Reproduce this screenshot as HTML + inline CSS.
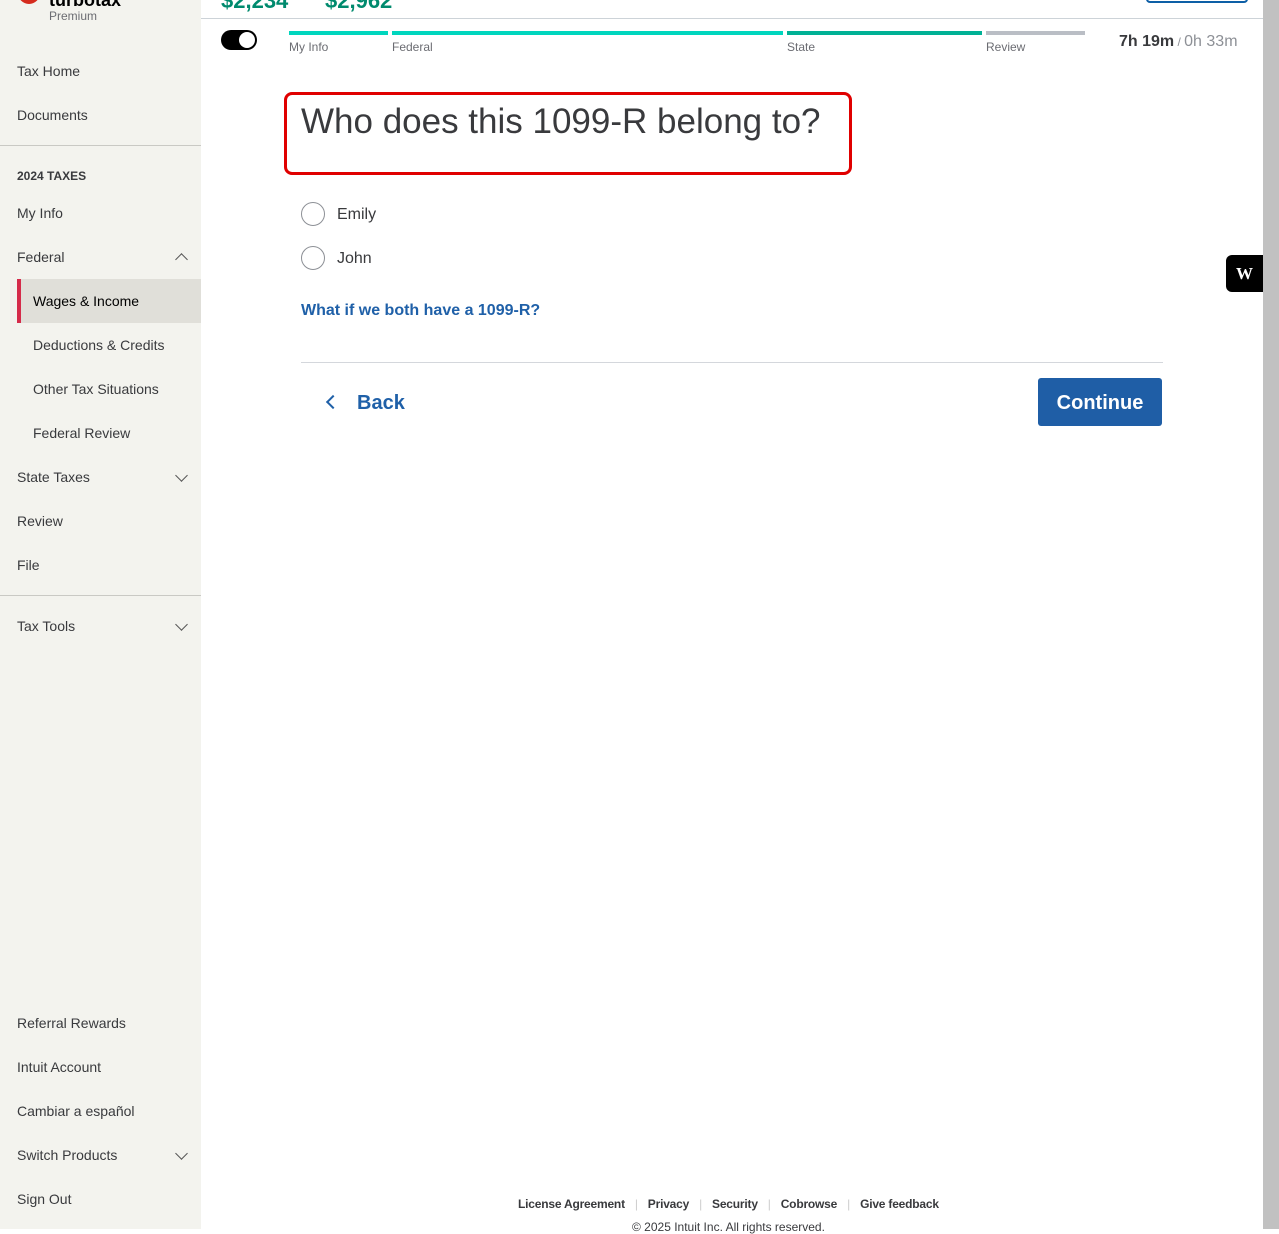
<!DOCTYPE html>
<html><head><meta charset="utf-8"><style>
*{margin:0;padding:0;box-sizing:border-box}
body{width:1279px;height:1229px;overflow:hidden;font-family:"Liberation Sans",sans-serif;background:#fff;position:relative;color:#393a3d}
.sb{position:absolute;left:0;top:0;width:201px;height:1229px;background:#f3f3ee}
.it{position:absolute;left:17px;font-size:14px;color:#393a3d}
.sub{left:33px}
.hr{position:absolute;left:0;width:201px;height:1px;background:#c9c9c4}
.chev{position:absolute;left:177px;width:9px;height:9px;border-left:1.6px solid #555;border-bottom:1.6px solid #555}
.dn{transform:rotate(-45deg)}
.up{transform:rotate(135deg)}
.a{position:absolute}
</style></head><body>
<div class="sb">
<div class="a" style="left:18px;top:-8px;width:22px;height:12px;border-radius:0 0 11px 11px;background:#d52b1e"></div>
<div class="a" style="left:49px;top:-10px;font-weight:bold;font-size:18px;color:#000">turbotax</div>
<div class="a" style="left:49px;top:9px;font-size:12px;color:#6b6c72">Premium</div>
<div class="it" style="top:63px">Tax Home</div>
<div class="it" style="top:107px">Documents</div>
<div class="hr" style="top:145px"></div>
<div class="it" style="top:169px;font-size:12px;font-weight:bold">2024 TAXES</div>
<div class="it" style="top:205px">My Info</div>
<div class="it" style="top:249px">Federal</div><div class="chev up" style="top:255px"></div>
<div class="a" style="left:17px;top:279px;width:184px;height:44px;background:#e0dfd9;border-left:4px solid #d52b4a"></div>
<div class="it sub" style="top:293px;color:#000">Wages &amp; Income</div>
<div class="it sub" style="top:337px">Deductions &amp; Credits</div>
<div class="it sub" style="top:381px">Other Tax Situations</div>
<div class="it sub" style="top:425px">Federal Review</div>
<div class="it" style="top:469px">State Taxes</div><div class="chev dn" style="top:471px"></div>
<div class="it" style="top:513px">Review</div>
<div class="it" style="top:557px">File</div>
<div class="hr" style="top:595px"></div>
<div class="it" style="top:618px">Tax Tools</div><div class="chev dn" style="top:620px"></div>
<div class="it" style="top:1015px">Referral Rewards</div>
<div class="it" style="top:1059px">Intuit Account</div>
<div class="it" style="top:1103px">Cambiar a español</div>
<div class="it" style="top:1147px">Switch Products</div><div class="chev dn" style="top:1149px"></div>
<div class="it" style="top:1191px">Sign Out</div>
</div>
<div class="a" style="left:221px;top:-12px;font-size:22px;color:#008a6e;font-weight:bold">$2,234</div>
<div class="a" style="left:325px;top:-12px;font-size:22px;color:#008a6e;font-weight:bold">$2,962</div>
<div class="a" style="left:1146px;top:-6px;width:102px;height:9px;border:2px solid #0d5fa6;border-radius:4px"></div>
<div class="a" style="left:201px;top:18px;width:1062px;height:1px;background:#cdd3d8"></div>
<div class="a" style="left:221px;top:30px;width:36px;height:20px;border-radius:10px;background:#000"></div>
<div class="a" style="left:239px;top:32px;width:16px;height:16px;border-radius:50%;background:#fff"></div>
<div class="a" style="left:289px;top:31px;width:99px;height:4px;background:#00d6be"></div>
<div class="a" style="left:392px;top:31px;width:391px;height:4px;background:#00d6be"></div>
<div class="a" style="left:787px;top:31px;width:195px;height:4px;background:#00b195"></div>
<div class="a" style="left:986px;top:31px;width:99px;height:4px;background:#babec5"></div>
<div class="a" style="left:289px;top:40px;font-size:12px;color:#6b6c72">My Info</div>
<div class="a" style="left:392px;top:40px;font-size:12px;color:#6b6c72">Federal</div>
<div class="a" style="left:787px;top:40px;font-size:12px;color:#6b6c72">State</div>
<div class="a" style="left:986px;top:40px;font-size:12px;color:#6b6c72">Review</div>
<div class="a" style="left:1119px;top:33px;font-size:16px"><b style="color:#393a3d">7h 19m</b><span style="color:#8d9096;font-size:12px"> / </span><span style="color:#8d9096">0h 33m</span></div>
<div class="a" style="left:1226px;top:255px;width:37px;height:37px;background:#000;border-radius:6px 0 0 6px;color:#fff;font-weight:bold;font-family:'Liberation Serif',serif;font-size:17px;text-align:center;line-height:37px">W</div>
<div class="a" style="left:1263px;top:0;width:16px;height:1229px;background:#c1c1c1"></div>
<div class="a" style="left:284px;top:92px;width:568px;height:83px;border:3px solid #e00000;border-radius:8px"></div>
<div class="a" style="left:301px;top:102px;font-size:35px;color:#393a3d">Who does this 1099-R belong to?</div>
<div class="a" style="left:301px;top:202px;width:24px;height:24px;border:1.5px solid #8d9096;border-radius:50%"></div>
<div class="a" style="left:337px;top:206px;font-size:16px">Emily</div>
<div class="a" style="left:301px;top:246px;width:24px;height:24px;border:1.5px solid #8d9096;border-radius:50%"></div>
<div class="a" style="left:337px;top:250px;font-size:16px">John</div>
<div class="a" style="left:301px;top:302px;font-size:16px;font-weight:bold;color:#1f60a8">What if we both have a 1099-R?</div>
<div class="a" style="left:301px;top:362px;width:862px;height:1px;background:#d4d7dc"></div>
<div class="a" style="left:328px;top:397px;width:10px;height:10px;border-left:2.5px solid #1f60a8;border-bottom:2.5px solid #1f60a8;transform:rotate(45deg)"></div>
<div class="a" style="left:357px;top:392px;font-size:20px;font-weight:bold;color:#1f60a8">Back</div>
<div class="a" style="left:1038px;top:378px;width:124px;height:48px;background:#1f5ea6;border-radius:3px;color:#fff;font-size:20px;font-weight:bold;text-align:center;line-height:50px">Continue</div>
<div class="a" style="left:518px;top:1197px;font-size:12px;font-weight:bold;color:#393a3d;white-space:nowrap;letter-spacing:-0.2px">License Agreement<span style="color:#ccc;margin:0 10px;font-weight:normal">|</span>Privacy<span style="color:#ccc;margin:0 10px;font-weight:normal">|</span>Security<span style="color:#ccc;margin:0 10px;font-weight:normal">|</span>Cobrowse<span style="color:#ccc;margin:0 10px;font-weight:normal">|</span>Give feedback</div>
<div class="a" style="left:632px;top:1220px;font-size:12px;color:#393a3d">© 2025 Intuit Inc. All rights reserved.</div>
</body></html>
